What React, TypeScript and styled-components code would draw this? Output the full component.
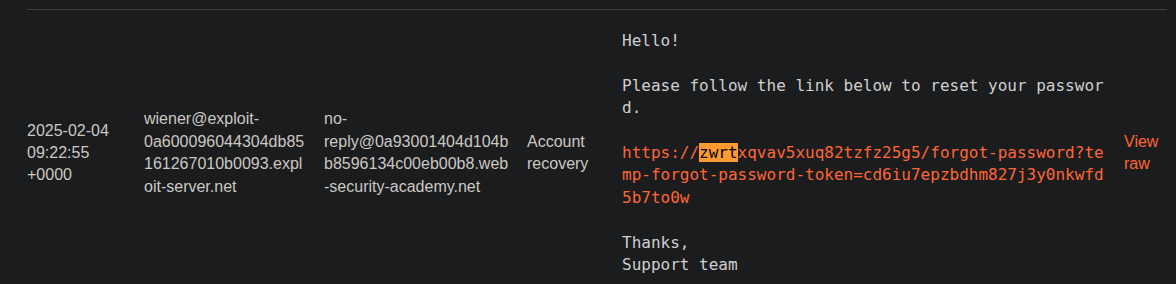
import styled, { createGlobalStyle } from 'styled-components'

const GlobalStyle = createGlobalStyle`
  html, body {
    margin: 0;
    padding: 0;
    background: #1b1c1e;
  }
  body {
    font-family: 'Liberation Sans', Arial, sans-serif;
    font-size: 16px;
    color: #ccc8c3;
  }
`

interface IEmail {
  date: string
  from: string
  to: string
  subject: string
}

const email: IEmail = {
  date: '2025-02-04 09:22:55 +0000',
  from: 'wiener@exploit-0a600096044304db85161267010b0093.exploit-server.net',
  to: 'no-reply@0a93001404d104bb8596134c00eb00b8.web-security-academy.net',
  subject: 'Account recovery',
}

const columns = [117, 180, 203, 95, 502, 43]

const App = () => {
  return (
    <Page>
      <GlobalStyle />
      <Table>
        <colgroup>
          {columns.map((w, i) => (
            <col key={i} width={w} />
          ))}
        </colgroup>
        <tbody>
          <Row>
            <Cell $gap={17}>{email.date}</Cell>
            <Cell $gap={16}>{email.from}</Cell>
            <Cell $gap={17}>{email.to}</Cell>
            <Cell $gap={15}>{email.subject}</Cell>
            <Cell $gap={17}>
              <Body>
                {'Hello!\n\nPlease follow the link below to reset your password.\n\n'}
                <BodyLink href="#">
                  https://<Mark>zwrt</Mark>
                  xqvav5xuq82tzfz25g5/forgot-password?temp-forgot-password-token=cd6iu7epzbdhm827j3y0nkwfd5b7to0w
                </BodyLink>
                {'\n\nThanks,\nSupport team'}
              </Body>
            </Cell>
            <Cell $gap={0}>
              <RawLink href="#">View raw</RawLink>
            </Cell>
          </Row>
        </tbody>
      </Table>
    </Page>
  )
}

export default App

const Page = styled.div`
  padding: 9px 9px 0 27px;
`

const Table = styled.table`
  width: 1140px;
  table-layout: fixed;
  border-collapse: collapse;
  border-spacing: 0;
`

const Row = styled.tr`
  border-top: 1px solid #3c3d3f;
`

const Cell = styled.td<{ $gap: number }>`
  padding: 0 ${(p) => p.$gap}px 0 0;
  vertical-align: middle;
  line-height: 1.4;
  overflow-wrap: anywhere;
`

const Body = styled.pre`
  margin: 20px 0;
  font-family: 'DejaVu Sans Mono', monospace;
  font-size: 16px;
  line-height: 1.4;
  color: #cfcfcf;
  white-space: pre-wrap;
  word-break: break-all;
`

const BodyLink = styled.a`
  color: #ff6633;
  text-decoration: none;
`

const Mark = styled.span`
  background: #ff9a33;
  color: #000;
`

const RawLink = styled.a`
  color: #ff6633;
  text-decoration: none;
`
